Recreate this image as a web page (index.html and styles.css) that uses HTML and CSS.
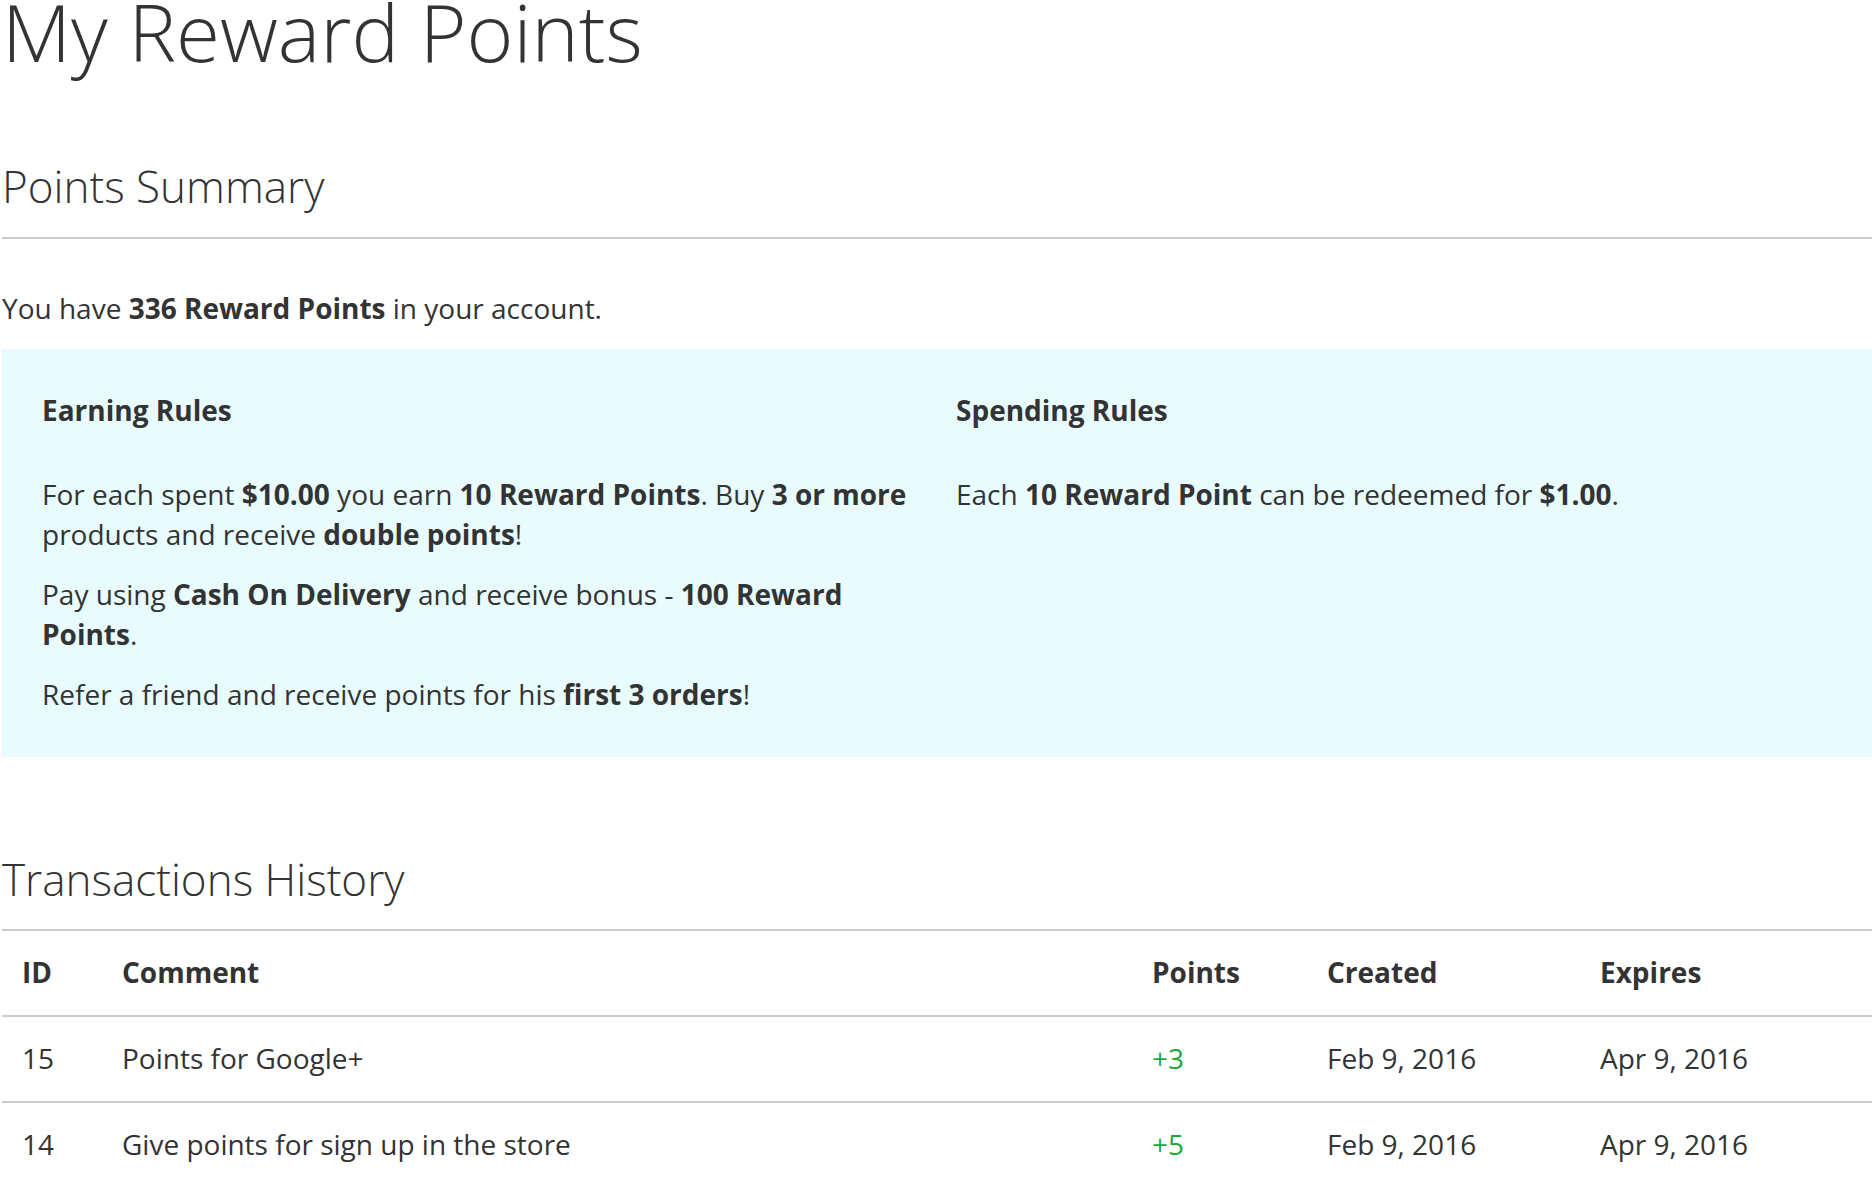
FILE: index.html
```html
<!DOCTYPE html>
<html lang="en">
<head>
<meta charset="utf-8">
<title>My Reward Points</title>
<link rel="stylesheet" href="styles.css">
</head>
<body>
<main class="page">
  <h1 class="page-title">My Reward Points</h1>

  <section class="block">
    <h2 class="block-title">Points Summary</h2>
    <p class="balance">You have <strong>336 Reward Points</strong> in your account.</p>

    <div class="rules">
      <div class="rules-col rules-earning">
        <h3 class="rules-title">Earning Rules</h3>
        <p>For each spent <strong>$10.00</strong> you earn <strong>10 Reward Points</strong>. Buy <strong>3 or more</strong> products and receive <strong>double points</strong>!</p>
        <p>Pay using <strong>Cash On Delivery</strong> and receive bonus - <strong>100 Reward Points</strong>.</p>
        <p>Refer a friend and receive points for his <strong>first 3 orders</strong>!</p>
      </div>
      <div class="rules-col rules-spending">
        <h3 class="rules-title">Spending Rules</h3>
        <p>Each <strong>10 Reward Point</strong> can be redeemed for <strong>$1.00</strong>.</p>
      </div>
    </div>
  </section>

  <section class="block block-history">
    <h2 class="block-title">Transactions History</h2>
    <table class="history">
      <colgroup>
        <col class="c-id">
        <col class="c-comment">
        <col class="c-points">
        <col class="c-created">
        <col class="c-expires">
      </colgroup>
      <thead>
        <tr>
          <th>ID</th>
          <th>Comment</th>
          <th>Points</th>
          <th>Created</th>
          <th>Expires</th>
        </tr>
      </thead>
      <tbody>
        <tr>
          <td>15</td>
          <td>Points for Google+</td>
          <td class="plus">+3</td>
          <td>Feb 9, 2016</td>
          <td>Apr 9, 2016</td>
        </tr>
        <tr>
          <td>14</td>
          <td>Give points for sign up in the store</td>
          <td class="plus">+5</td>
          <td>Feb 9, 2016</td>
          <td>Apr 9, 2016</td>
        </tr>
      </tbody>
    </table>
  </section>
</main>
</body>
</html>
```

FILE: styles.css
```css
html, body {
  margin: 0;
  padding: 0;
  background: #ffffff;
  overflow: hidden;
}

body {
  font-family: "Open Sans", "Noto Sans", "Liberation Sans", sans-serif;
  font-size: 28px;
  line-height: 40px;
  color: #333333;
}

.page {
  width: 1872px;
  margin-left: 2px;
}

.page-title {
  margin: -13px 0 0;
  font-size: 80px;
  line-height: 88px;
  font-weight: 300;
}

.block-title {
  margin: 0;
  padding-bottom: 27px;
  border-bottom: 2px solid #cccccc;
  font-size: 44px;
  line-height: 48px;
  font-weight: 300;
}

.block {
  margin-top: 87px;
}

.block-history {
  margin-top: 98px;
}

.block-history .block-title {
  padding-bottom: 26px;
}

.balance {
  margin: 49px 0 21px;
}

strong {
  font-weight: 700;
}

.rules {
  display: grid;
  grid-template-columns: 914px 1fr;
  padding: 41px 40px 23px;
  background: #e8fbfd;
}

.rules-col {
  min-width: 0;
}

.rules-earning {
  padding-right: 30px;
}

.rules-title {
  margin: 0 0 44px;
  font-size: 28px;
  line-height: 40px;
  font-weight: 700;
}

.rules p {
  margin: 0 0 20px;
}

.history {
  width: 100%;
  border-collapse: collapse;
  table-layout: fixed;
}

.c-id { width: 100px; }
.c-comment { width: 1030px; }
.c-points { width: 175px; }
.c-created { width: 273px; }

.history th,
.history td {
  padding: 21px 20px 23px;
  text-align: left;
  vertical-align: top;
  border-bottom: 2px solid #cccccc;
}

.history th {
  font-weight: 700;
}

.history td.plus {
  color: #1fa83f;
}
```
